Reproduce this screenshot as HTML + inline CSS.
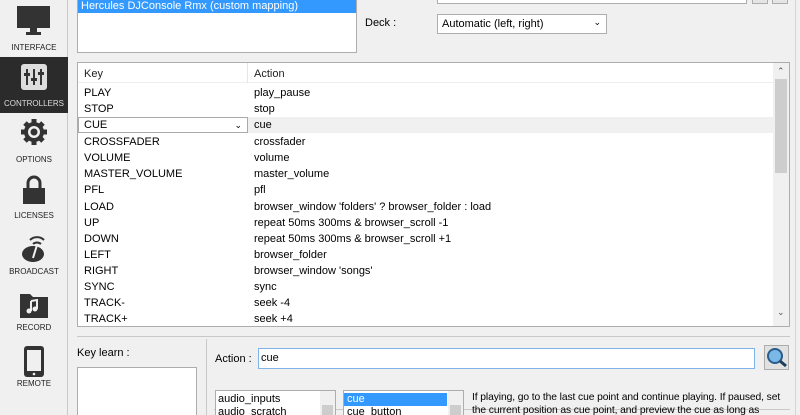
<!DOCTYPE html><html><head><style>
*{margin:0;padding:0;box-sizing:border-box}
html,body{width:800px;height:415px;overflow:hidden}
body{background:#f0f0f0;font-family:"Liberation Sans",sans-serif;font-size:11px;color:#000;position:relative}
.a{position:absolute}
.side{left:0;top:0;width:68px;height:415px;background:#f0f0f0;border-right:1px solid #c8c8c8}
.lbl{position:absolute;width:68px;text-align:center;font-size:8px;color:#222;left:0}
.row{position:absolute;left:78px;width:695px;height:16px;line-height:16px}
.row span{position:absolute;left:6px}
.row span+span{left:176px}
</style></head><body>
<div class="a side"></div>
<svg class="a" style="left:17px;top:6px" width="34" height="30"><rect x="0" y="0" width="33" height="22" fill="#333"/><rect x="13" y="22" width="7" height="4" fill="#333"/><rect x="9" y="26" width="15" height="3" fill="#333"/></svg>
<div class="lbl" style="top:43px">INTERFACE</div>
<div class="a" style="left:0;top:57px;width:68px;height:56px;background:#2b2b2b"></div>
<svg class="a" style="left:21px;top:64px" width="26" height="26"><rect width="26" height="26" rx="3" fill="#ddd"/><g stroke="#333" stroke-width="2"><line x1="6" y1="5" x2="6" y2="21"/><line x1="13" y1="5" x2="13" y2="21"/><line x1="20" y1="5" x2="20" y2="21"/></g><g fill="#333"><rect x="3" y="9" width="6" height="3"/><rect x="10" y="14" width="6" height="3"/><rect x="17" y="8" width="6" height="3"/></g></svg>
<div class="lbl" style="top:99px;color:#ddd">CONTROLLERS</div>
<svg class="a" style="left:20px;top:118px" width="28" height="28" viewBox="0 0 28 28"><g fill="#333"><circle cx="14" cy="14" r="10"/><g stroke="#333" stroke-width="5"><line x1="14" y1="1" x2="14" y2="27"/><line x1="1" y1="14" x2="27" y2="14"/><line x1="5" y1="5" x2="23" y2="23"/><line x1="23" y1="5" x2="5" y2="23"/></g></g><circle cx="14" cy="14" r="6" fill="#f0f0f0"/><circle cx="14" cy="14" r="3.5" fill="#333"/></svg>
<div class="lbl" style="top:155px">OPTIONS</div>
<svg class="a" style="left:22px;top:175px" width="24" height="30"><path d="M6 13V8a6 6 0 0 1 12 0v5" fill="none" stroke="#333" stroke-width="3"/><rect x="1" y="13" width="22" height="16" fill="#333"/></svg>
<div class="lbl" style="top:211px">LICENSES</div>
<svg class="a" style="left:20px;top:232px" width="28" height="32"><ellipse cx="13" cy="22" rx="11" ry="8" fill="#333"/><path d="M10 8a10 10 0 0 1 14 0M13 12a6 6 0 0 1 8 0" fill="none" stroke="#333" stroke-width="2"/><line x1="17" y1="13" x2="13" y2="26" stroke="#f0f0f0" stroke-width="2"/></svg>
<div class="lbl" style="top:267px">BROADCAST</div>
<svg class="a" style="left:19px;top:291px" width="30" height="28"><path d="M1 3h10l3 3h15v21H1z" fill="#333"/><path d="M12 10v10M12 10l6-1v9" stroke="#f0f0f0" stroke-width="2" fill="none"/><circle cx="10" cy="20" r="2.5" fill="#f0f0f0"/><circle cx="16" cy="18" r="2.5" fill="#f0f0f0"/></svg>
<div class="lbl" style="top:323px">RECORD</div>
<svg class="a" style="left:23px;top:345px" width="22" height="33"><rect x="1" y="1" width="20" height="31" rx="3" fill="#333"/><rect x="4" y="5" width="14" height="21" fill="#f0f0f0"/><circle cx="11" cy="29" r="1.3" fill="#f0f0f0"/></svg>
<div class="lbl" style="top:379px">REMOTE</div>

<div class="a" style="left:77px;top:-2px;width:280px;height:55px;background:#fff;border:1px solid #adadad"></div>
<div class="a" style="left:78px;top:0;width:278px;height:13px;background:#3399ff;color:#fff;padding-left:3px;line-height:12px">Hercules DJConsole Rmx (custom mapping)</div>
<div class="a" style="left:365px;top:17px">Deck :</div>
<div class="a" style="left:437px;top:-2px;width:310px;height:6px;background:#fff;border:1px solid #adadad"></div>
<div class="a" style="left:752px;top:-2px;width:16px;height:6px;border:1px solid #adadad;background:#e5e5e5"></div>
<div class="a" style="left:772px;top:-2px;width:16px;height:6px;border:1px solid #adadad;background:#e5e5e5"></div>
<div class="a" style="left:437px;top:14px;width:170px;height:20px;background:#fff;border:1px solid #adadad;padding:3px 4px">Automatic (left, right)<span style="position:absolute;right:5px;top:2px;font-size:9px">&#8964;</span></div>
<div class="a" style="left:795px;top:0;width:1px;height:415px;background:#d5d5d5"></div>

<div class="a" style="left:77px;top:62px;width:713px;height:265px;background:#fff;border:1px solid #adadad"></div>
<div class="a" style="left:78px;top:63px;width:695px;height:20px;background:#fff;border-bottom:1px solid #eee"></div>
<div class="a" style="left:84px;top:68px;color:#222">Key</div>
<div class="a" style="left:247px;top:63px;width:1px;height:20px;background:#e5e5e5"></div>
<div class="a" style="left:254px;top:68px;color:#222">Action</div>
<div class="a" style="left:773px;top:63px;width:16px;height:263px;background:#f0f0f0"></div>
<div class="a" style="left:775px;top:79px;width:12px;height:94px;background:#cdcdcd"></div>
<div class="a" style="left:777px;top:66px;font-size:9px;color:#555">&#8963;</div>
<div class="a" style="left:777px;top:307px;font-size:9px;color:#555">&#8964;</div>
<div class="a" style="left:78px;top:117px;width:695px;height:16px;background:#f0f0f0"></div>
<div class="a" style="left:78px;top:117px;width:170px;height:16px;background:#fff;border:1px solid #aaa;padding-left:5px;line-height:14px">CUE<span style="position:absolute;right:5px;top:0;font-size:9px">&#8964;</span></div>
<div class="row" style="top:85px"><span>PLAY</span><span>play_pause</span></div>
<div class="row" style="top:101px"><span>STOP</span><span>stop</span></div>
<div class="row" style="top:117px"><span></span><span>cue</span></div>
<div class="row" style="top:134px"><span>CROSSFADER</span><span>crossfader</span></div>
<div class="row" style="top:150px"><span>VOLUME</span><span>volume</span></div>
<div class="row" style="top:166px"><span>MASTER_VOLUME</span><span>master_volume</span></div>
<div class="row" style="top:182px"><span>PFL</span><span>pfl</span></div>
<div class="row" style="top:199px"><span>LOAD</span><span>browser_window 'folders' ? browser_folder : load</span></div>
<div class="row" style="top:215px"><span>UP</span><span>repeat 50ms 300ms &amp; browser_scroll -1</span></div>
<div class="row" style="top:231px"><span>DOWN</span><span>repeat 50ms 300ms &amp; browser_scroll +1</span></div>
<div class="row" style="top:247px"><span>LEFT</span><span>browser_folder</span></div>
<div class="row" style="top:263px"><span>RIGHT</span><span>browser_window 'songs'</span></div>
<div class="row" style="top:279px"><span>SYNC</span><span>sync</span></div>
<div class="row" style="top:295px"><span>TRACK-</span><span>seek -4</span></div>
<div class="row" style="top:311px"><span>TRACK+</span><span>seek +4</span></div>

<div class="a" style="left:77px;top:336px;width:713px;height:1px;background:#c8c8c8"></div>
<div class="a" style="left:77px;top:347px">Key learn :</div>
<div class="a" style="left:77px;top:367px;width:120px;height:60px;background:#fff;border:1px solid #adadad"></div>
<div class="a" style="left:206px;top:339px;width:1px;height:80px;background:#c8c8c8"></div>
<div class="a" style="left:215px;top:353px">Action :</div>
<div class="a" style="left:258px;top:348px;width:497px;height:21px;background:#fff;border:1px solid #7eb4ea;padding:3px 2px">cue</div>
<div class="a" style="left:764px;top:345px;width:25px;height:25px;background:#e1e1e1;border:1px solid #adadad"></div>
<svg class="a" style="left:766px;top:347px" width="22" height="21"><circle cx="9" cy="9" r="7" fill="#7ab8e8" stroke="#2a5d8a" stroke-width="2"/><line x1="14" y1="14" x2="20" y2="19" stroke="#1d3d5c" stroke-width="3"/></svg>
<div class="a" style="left:214px;top:409px;width:576px;height:1px;background:#c8c8c8"></div>
<div class="a" style="left:215px;top:390px;width:121px;height:30px;background:#fff;border:1px solid #adadad"></div>
<div class="a" style="left:218px;top:393px;line-height:13px">audio_inputs<br>audio_scratch</div>
<div class="a" style="left:320px;top:391px;width:15px;height:24px;background:#f0f0f0"></div>
<div class="a" style="left:322px;top:405px;width:11px;height:10px;background:#cdcdcd"></div>
<div class="a" style="left:343px;top:390px;width:121px;height:30px;background:#fff;border:1px solid #adadad"></div>
<div class="a" style="left:344px;top:393px;width:103px;height:13px;background:#3399ff"></div>
<div class="a" style="left:347px;top:393px;line-height:13px"><span style="color:#fff">cue</span><br>cue_button</div>
<div class="a" style="left:448px;top:391px;width:15px;height:24px;background:#f0f0f0"></div>
<div class="a" style="left:450px;top:405px;width:11px;height:10px;background:#cdcdcd"></div>
<div class="a" style="left:472px;top:391px;width:320px;line-height:13px;font-size:10.3px;white-space:nowrap;letter-spacing:-0.1px">If playing, go to the last cue point and continue playing. If paused, set<br>the current position as cue point, and preview the cue as long as</div>
</body></html>
